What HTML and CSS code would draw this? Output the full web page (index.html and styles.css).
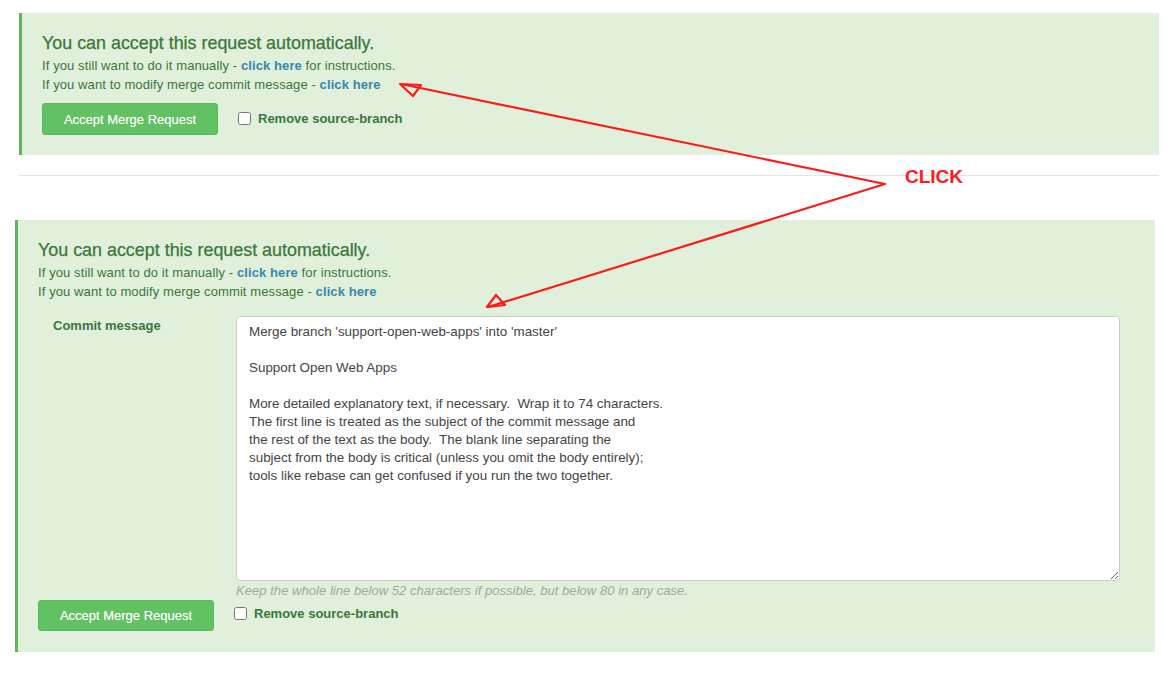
FILE: index.html
```html
<!DOCTYPE html>
<html>
<head>
<meta charset="utf-8">
<link rel="stylesheet" href="styles.css">
</head>
<body>
<div class="page">
  <div class="panel panel-top">
    <h4 class="title">You can accept this request automatically.</h4>
    <p class="line">If you still want to do it manually - <a class="lnk">click here</a> for instructions.</p>
    <p class="line">If you want to modify merge commit message - <a class="lnk">click here</a></p>
    <div class="actions actions-top">
      <button class="btn">Accept Merge Request</button>
      <label class="chk"><input type="checkbox"><span>Remove source-branch</span></label>
    </div>
  </div>

  <div class="sep"></div>

  <div class="panel panel-bottom">
    <h4 class="title">You can accept this request automatically.</h4>
    <p class="line">If you still want to do it manually - <a class="lnk">click here</a> for instructions.</p>
    <p class="line">If you want to modify merge commit message - <a class="lnk">click here</a></p>
    <div class="form-row">
      <div class="form-label">Commit message</div>
      <div class="form-field">
        <textarea class="msg">Merge branch 'support-open-web-apps' into 'master'

Support Open Web Apps

More detailed explanatory text, if necessary.  Wrap it to 74 characters.
The first line is treated as the subject of the commit message and
the rest of the text as the body.  The blank line separating the
subject from the body is critical (unless you omit the body entirely);
tools like rebase can get confused if you run the two together.</textarea>
        <div class="help">Keep the whole line below 52 characters if possible, but below 80 in any case.</div>
      </div>
    </div>
    <div class="actions actions-bottom">
      <button class="btn">Accept Merge Request</button>
      <label class="chk"><input type="checkbox"><span>Remove source-branch</span></label>
    </div>
  </div>
</div>

<svg class="annot" width="1171" height="676" viewBox="0 0 1171 676">
  <g fill="none" stroke="#ff1a1a" stroke-width="2.2" stroke-linejoin="round" stroke-linecap="round">
    <polyline points="401,84 885,184 488,307"/>
    <polygon points="400,84 421,85 413,96"/>
    <polygon points="487,307 496,295 505,305"/>
  </g>
  <text x="905" y="183" class="click">CLICK</text>
</svg>
</body>
</html>
```

FILE: styles.css
```css
* { box-sizing: border-box; }
html, body { margin: 0; padding: 0; background: #fff; }
body {
  font-family: "Liberation Sans", Arial, Helvetica, sans-serif;
  font-size: 13px;
  color: #3c763d;
  position: relative;
  width: 1171px;
  height: 676px;
  overflow: hidden;
}
.page { padding-top: 13px; }

.panel {
  width: 1140px;
  background: #e0f0da;
  border-left: 3px solid #63b35c;
  padding: 18px 20px 20px 20px;
}
.panel-top { margin-left: 19px; height: 142px; }
.panel-bottom { margin-left: 15px; height: 432px; }

.title {
  margin: 0 0 1px 0;
  font-size: 17.9px;
  line-height: 24px;
  font-weight: normal;
  color: #3c763d;
  -webkit-text-stroke: 0.25px #3c763d;
}
.line {
  margin: 0;
  font-size: 13px;
  letter-spacing: 0.1px;
  line-height: 19px;
  color: #3c763d;
}
.lnk {
  color: #3a87ad;
  font-weight: bold;
  text-decoration: none;
}

.actions {
  display: flex;
  align-items: center;
  gap: 20px;
}
.actions-top { margin-top: 9px; }
.actions-bottom { margin-top: 0; }
.actions-bottom .chk { margin-top: -4px; }

.btn {
  width: 176px;
  height: 32px;
  background: #62c162;
  border: 1px solid #5cb85c;
  border-radius: 3px;
  color: #fff;
  font-family: "Liberation Sans", Arial, sans-serif;
  font-size: 13px;
  padding: 0;
  text-shadow: 0 0 0.5px rgba(255,255,255,0.6);
}
.actions-bottom .btn { height: 31px; }

.chk {
  display: flex;
  align-items: center;
  gap: 7px;
  font-weight: bold;
  color: #3c763d;
  font-size: 13px;
}
.actions-top .chk { margin-top: -2px; }
.chk input {
  margin: 0;
  width: 13px;
  height: 13px;
}

.sep {
  margin: 20px 0 0 19px;
  width: 1140px;
  height: 1px;
  background: #e3e3e3;
  margin-bottom: 44px;
}

.form-row {
  display: grid;
  grid-template-columns: 198px 884px;
  margin-top: 15px;
}
.form-label {
  padding: 1px 0 0 15px;
  font-weight: bold;
  line-height: 18px;
}
.msg {
  display: block;
  width: 884px;
  height: 265px;
  border: 1px solid #cccccc;
  border-radius: 4px;
  background: #fff;
  padding: 6px 12px;
  font-family: "Liberation Sans", Arial, sans-serif;
  font-size: 13.4px;
  line-height: 18px;
  color: #444;
  resize: vertical;
  margin: 0;
}
.help {
  font-size: 13.1px;
  font-style: italic;
  color: #a0a8a0;
  line-height: 18px;
  margin-top: 1px;
}

.annot {
  position: absolute;
  left: 0;
  top: 0;
  pointer-events: none;
}
.click {
  font-family: "Liberation Sans", Arial, sans-serif;
  font-weight: bold;
  font-size: 19px;
  fill: #ff1a1a;
}
```
